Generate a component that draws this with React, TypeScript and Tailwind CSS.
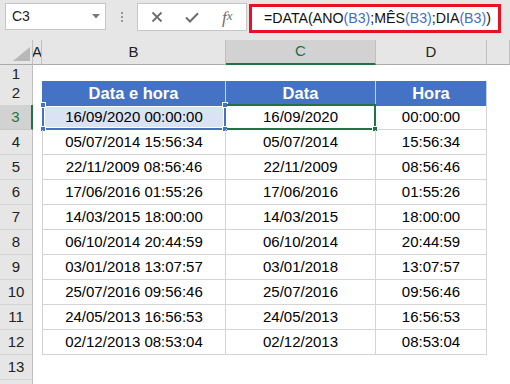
import type { ReactNode } from "react"

const ROWS: [string, string, string][] = [
  ["16/09/2020 00:00:00", "16/09/2020", "00:00:00"],
  ["05/07/2014 15:56:34", "05/07/2014", "15:56:34"],
  ["22/11/2009 08:56:46", "22/11/2009", "08:56:46"],
  ["17/06/2016 01:55:26", "17/06/2016", "01:55:26"],
  ["14/03/2015 18:00:00", "14/03/2015", "18:00:00"],
  ["06/10/2014 20:44:59", "06/10/2014", "20:44:59"],
  ["03/01/2018 13:07:57", "03/01/2018", "13:07:57"],
  ["25/07/2016 09:56:46", "25/07/2016", "09:56:46"],
  ["24/05/2013 16:56:53", "24/05/2013", "16:56:53"],
  ["02/12/2013 08:53:04", "02/12/2013", "08:53:04"],
]

const GRID = "grid grid-cols-[33px_9px_184px_150px_111px_23px]"

function Handle({ pos, color }: { pos: string; color: string }) {
  return <span className={`absolute size-[6px] border border-white ${color} ${pos}`} />
}

function RowHeader({ n, active }: { n?: number; active?: boolean }) {
  return (
    <div
      className={
        active
          ? "flex items-center justify-center border-b border-r-2 border-b-[#c8c8c8] border-r-[#217346] bg-[#d2d2d2] text-[#217346]"
          : "flex items-center justify-center border-b border-r border-b-[#d4d4d4] border-r-[#bfbfbf] bg-[#e6e6e6] text-[#222]"
      }
    >
      {n}
    </div>
  )
}

function Ref({ children }: { children: ReactNode }) {
  return <span className="text-[#3f6fc6]">{children}</span>
}

function Toolbar() {
  return (
    <div className="flex h-[40px] items-start bg-[#e6e6e6] pl-[5px] pt-[3px]">
      <div className="flex h-[27px] w-[101px] items-center justify-between border border-[#c6c6c6] bg-white pl-[6px] pr-[5px] text-[14px] text-[#222]">
        <span>C3</span>
        <svg width="8" height="5" viewBox="0 0 8 5">
          <path d="M0 0h8L4 4.5z" fill="#7a7a7a" />
        </svg>
      </div>
      <div className="flex h-[27px] w-[31px] flex-col items-center justify-center gap-[2px]">
        <span className="size-[2px] bg-[#9a9a9a]" />
        <span className="size-[2px] bg-[#9a9a9a]" />
        <span className="size-[2px] bg-[#9a9a9a]" />
      </div>
      <div className="flex h-[28px] w-[110px] items-center border border-[#c6c6c6] bg-white px-[1px]">
        <div className="flex w-[36px] justify-center">
          <svg width="12" height="12" viewBox="0 0 12 12">
            <path d="M1.5 1.5l9 9M10.5 1.5l-9 9" stroke="#6e6e6e" strokeWidth="1.8" />
          </svg>
        </div>
        <div className="flex w-[36px] justify-center">
          <svg width="14" height="11" viewBox="0 0 14 11">
            <path d="M1 5.5l4 4L13 1.2" stroke="#6e6e6e" strokeWidth="2" fill="none" />
          </svg>
        </div>
        <div className="flex w-[36px] justify-center font-['Liberation_Serif',serif] text-[17px] italic leading-none text-[#6e6e6e]">
          f<span className="text-[13px]">x</span>
        </div>
      </div>
      <div className="ml-[2px] mt-[1px] flex h-[29px] w-[252px] items-center border-[3px] border-[#e81123] bg-white pl-[12px] text-[14.2px] text-[#111] whitespace-nowrap">
        =DATA(ANO<Ref>(B3)</Ref>;MÊS<Ref>(B3)</Ref>;DIA<Ref>(B3)</Ref>)
      </div>
    </div>
  )
}

function ColumnHeaders() {
  const base = "flex items-center justify-center border-b border-r border-b-[#ababab] border-r-[#bfbfbf] bg-[#e6e6e6] text-[#222]"
  return (
    <div className={`${GRID} h-[23px] text-[15px]`}>
      <div className="relative border-b border-r border-b-[#ababab] border-r-[#bfbfbf] bg-[#e6e6e6]">
        <svg className="absolute bottom-[3px] right-[2px]" width="17" height="14" viewBox="0 0 17 14">
          <path d="M17 0V14H0z" fill="#b8b8b8" />
        </svg>
      </div>
      <div className={`${base} overflow-hidden`}>A</div>
      <div className={base}>B</div>
      <div className="flex items-center justify-center border-b-2 border-r border-b-[#217346] border-r-[#bfbfbf] bg-[#d2d2d2] text-[#217346]">
        C
      </div>
      <div className={base}>D</div>
      <div className={base} />
    </div>
  )
}

function EmptyRow({ n, h }: { n?: number; h: string }) {
  return (
    <div className={`${GRID} ${h}`}>
      <RowHeader n={n} />
      <div />
      <div />
      <div />
      <div />
      <div />
    </div>
  )
}

export default function App() {
  const cell = "flex items-center justify-center border-b border-r border-[#d4d4d4]"
  const head = "flex items-center justify-center border-r border-[#c5d0e8] bg-[#4472c4] text-[16.5px] font-bold text-white"

  return (
    <div className="h-[384px] w-[510px] overflow-hidden bg-white font-['Liberation_Sans',Arial,sans-serif] text-[15px] text-black">
      <Toolbar />
      <ColumnHeaders />

      <EmptyRow n={1} h="h-[18px]" />

      <div className={`${GRID} h-[24px]`}>
        <RowHeader n={2} />
        <div />
        <div className={head}>Data e hora</div>
        <div className={head}>Data</div>
        <div className={head}>Hora</div>
        <div />
      </div>

      {ROWS.map(([full, date, time], i) => {
        const active = i === 0
        return (
          <div key={full} className={`${GRID} h-[25px]`}>
            <RowHeader n={i + 3} active={active} />
            <div />
            <div className={`${cell} relative border-l`}>
              {active && (
                <div className="absolute -left-px -top-px bottom-[-1px] right-[-1px] border-2 border-[#4472c4] bg-[#dae3f3] shadow-[inset_0_0_0_1px_white]">
                  <Handle color="bg-[#4472c4]" pos="-left-[4px] -top-[4px]" />
                  <Handle color="bg-[#4472c4]" pos="-right-[4px] -top-[4px]" />
                  <Handle color="bg-[#4472c4]" pos="-left-[4px] -bottom-[4px]" />
                  <Handle color="bg-[#4472c4]" pos="-right-[4px] -bottom-[4px]" />
                </div>
              )}
              <span className="relative">{full}</span>
            </div>
            <div className={`${cell} relative`}>
              {active && (
                <div className="absolute -top-px bottom-[-1px] left-[1px] right-[-1px] border-y-2 border-r-2 border-[#217346]">
                  <Handle color="bg-[#217346]" pos="-right-[4px] -bottom-[4px]" />
                </div>
              )}
              <span className="relative">{date}</span>
            </div>
            <div className={cell}>{time}</div>
            <div />
          </div>
        )
      })}

      <EmptyRow n={13} h="h-[25px]" />
      <EmptyRow h="h-[25px]" />
    </div>
  )
}
